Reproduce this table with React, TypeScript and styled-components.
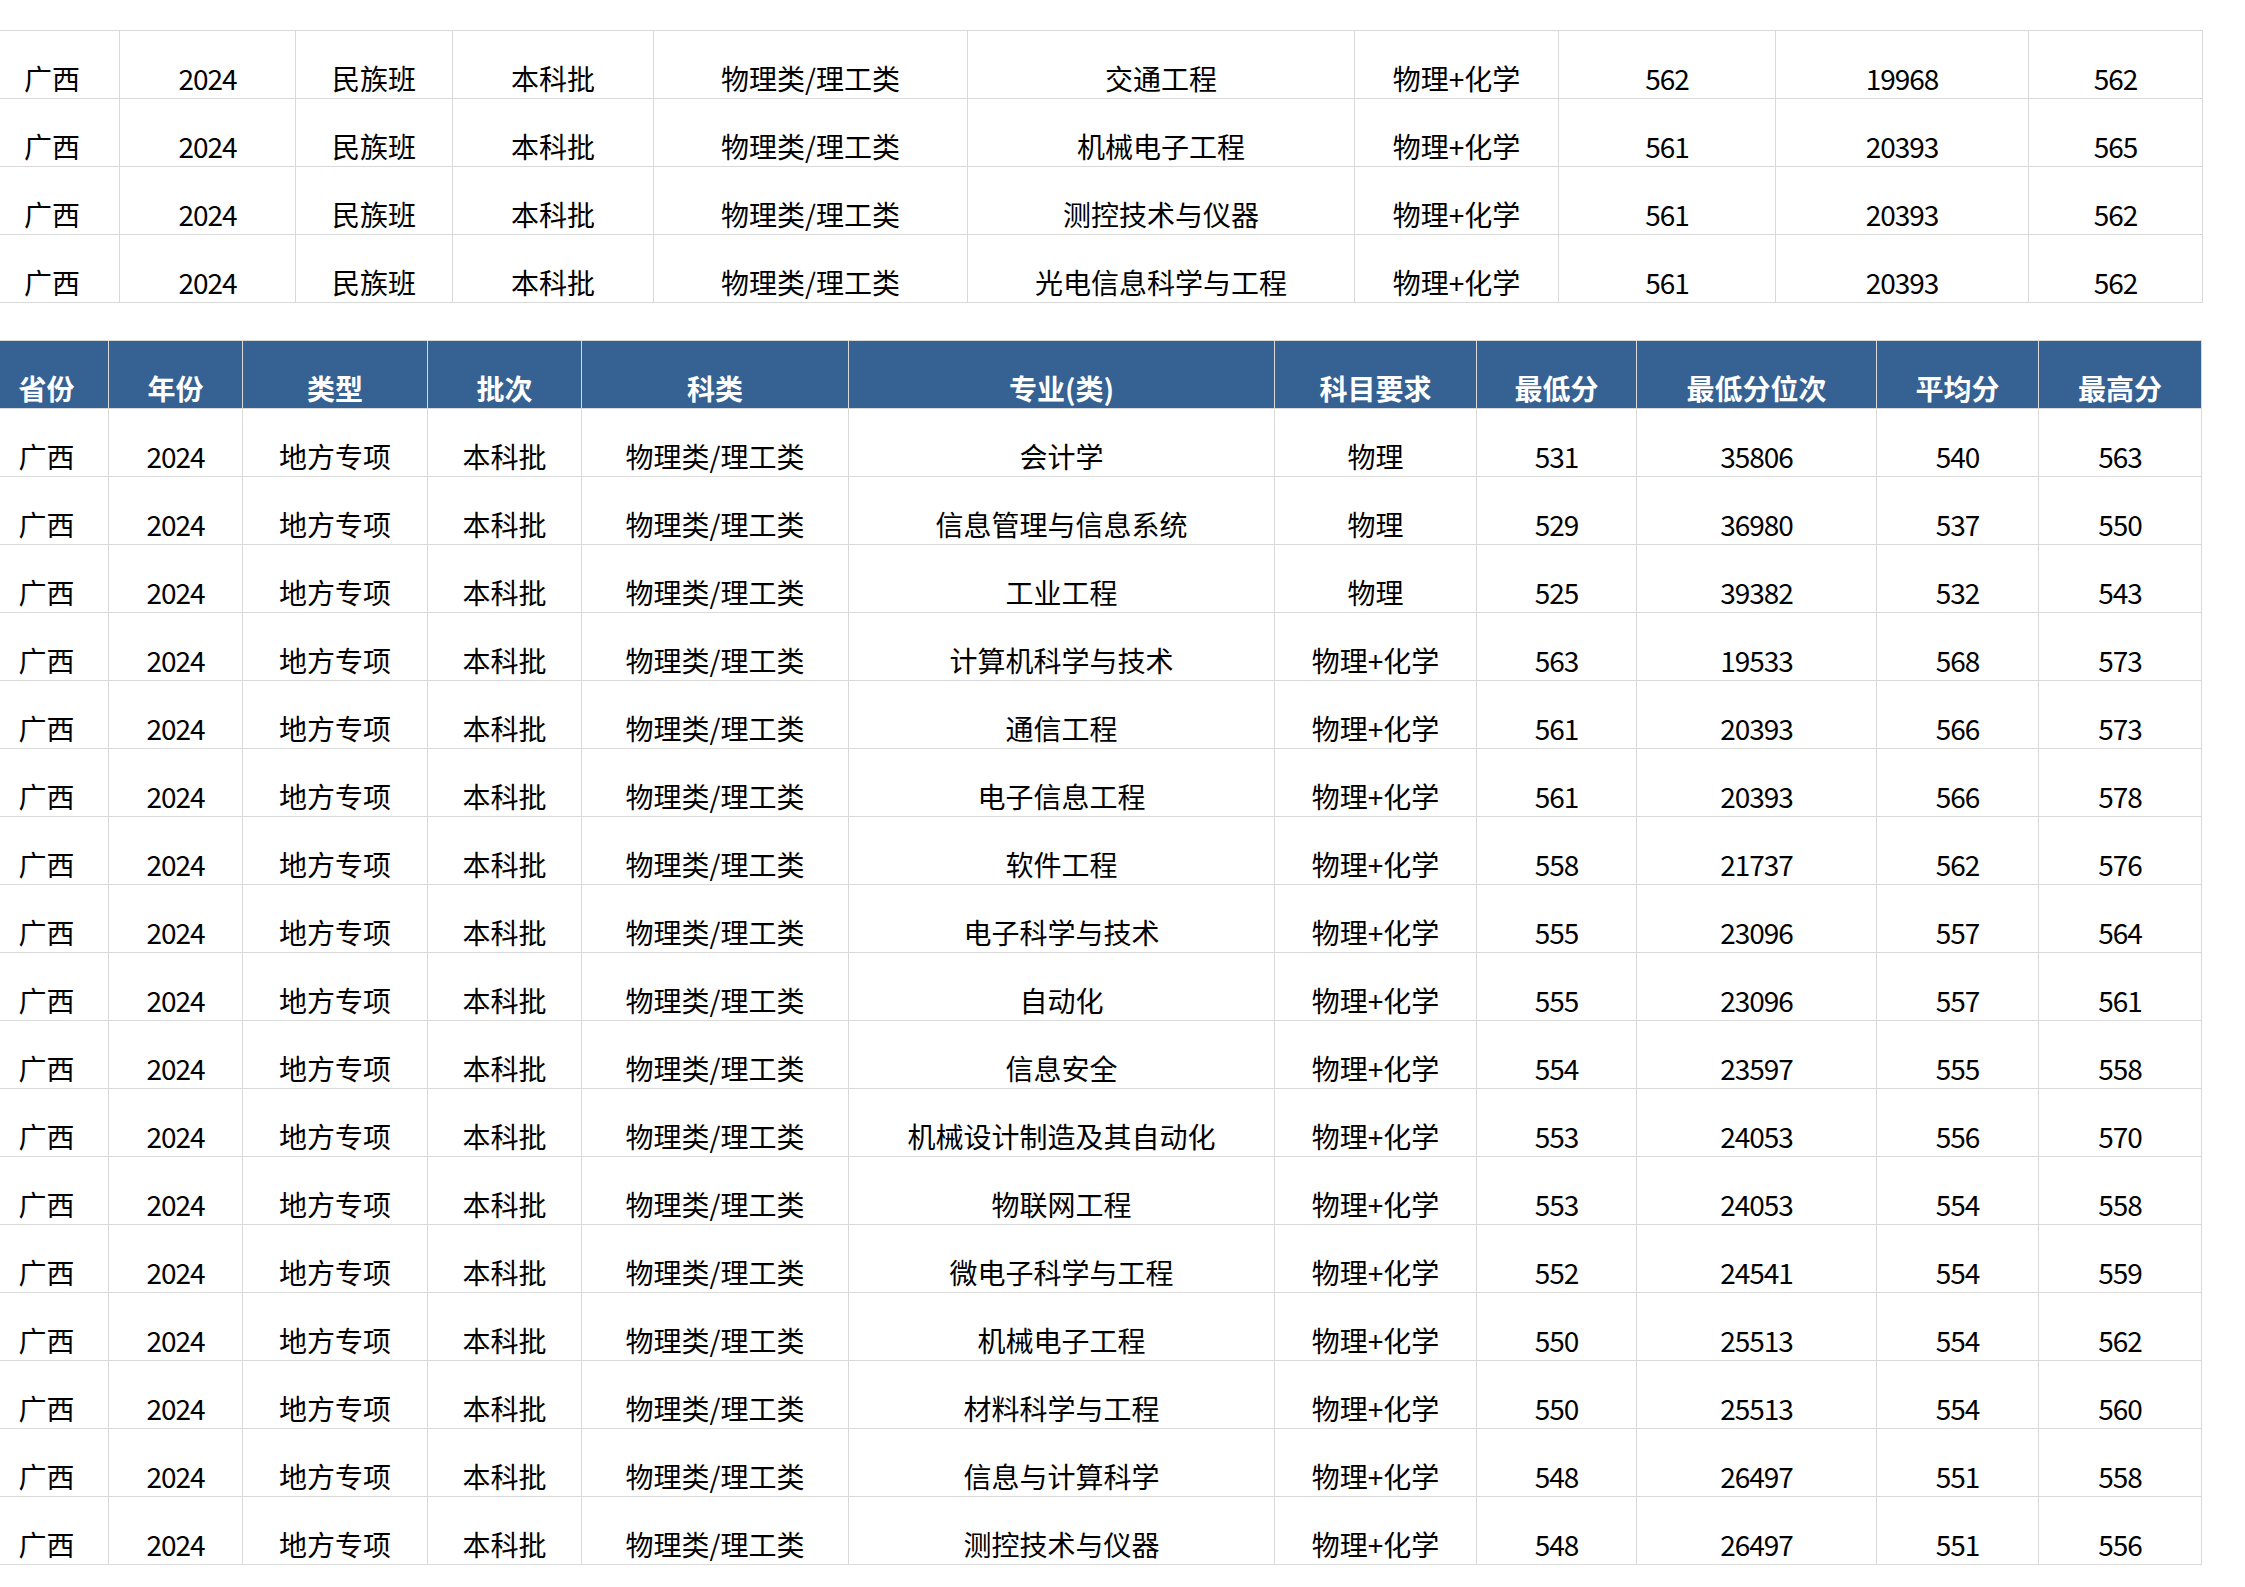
import React from 'react';
import styled, {createGlobalStyle} from 'styled-components';

const GlobalStyle = createGlobalStyle`
    html, body {
        margin: 0;
        padding: 0;
        background: #ffffff;
    }
    body {
        font-family: "Noto Sans CJK SC", "Noto Sans", sans-serif;
    }
`

// column widths (px), first column starts 15px off the left edge
const topCols = [135, 176, 157, 201, 314, 387, 204, 217, 253, 174];
const mainCols = [124, 134, 185, 154, 267, 426, 202, 160, 240, 162, 163];

const topRows = [
    ['广西', '2024', '民族班', '本科批', '物理类/理工类', '交通工程', '物理+化学', '562', '19968', '562'],
    ['广西', '2024', '民族班', '本科批', '物理类/理工类', '机械电子工程', '物理+化学', '561', '20393', '565'],
    ['广西', '2024', '民族班', '本科批', '物理类/理工类', '测控技术与仪器', '物理+化学', '561', '20393', '562'],
    ['广西', '2024', '民族班', '本科批', '物理类/理工类', '光电信息科学与工程', '物理+化学', '561', '20393', '562'],
];

const headers = ['省份', '年份', '类型', '批次', '科类', '专业(类)', '科目要求', '最低分', '最低分位次', '平均分', '最高分'];

const majors: [string, string, string, string, string, string][] = [
    ['会计学', '物理', '531', '35806', '540', '563'],
    ['信息管理与信息系统', '物理', '529', '36980', '537', '550'],
    ['工业工程', '物理', '525', '39382', '532', '543'],
    ['计算机科学与技术', '物理+化学', '563', '19533', '568', '573'],
    ['通信工程', '物理+化学', '561', '20393', '566', '573'],
    ['电子信息工程', '物理+化学', '561', '20393', '566', '578'],
    ['软件工程', '物理+化学', '558', '21737', '562', '576'],
    ['电子科学与技术', '物理+化学', '555', '23096', '557', '564'],
    ['自动化', '物理+化学', '555', '23096', '557', '561'],
    ['信息安全', '物理+化学', '554', '23597', '555', '558'],
    ['机械设计制造及其自动化', '物理+化学', '553', '24053', '556', '570'],
    ['物联网工程', '物理+化学', '553', '24053', '554', '558'],
    ['微电子科学与工程', '物理+化学', '552', '24541', '554', '559'],
    ['机械电子工程', '物理+化学', '550', '25513', '554', '562'],
    ['材料科学与工程', '物理+化学', '550', '25513', '554', '560'],
    ['信息与计算科学', '物理+化学', '548', '26497', '551', '558'],
    ['测控技术与仪器', '物理+化学', '548', '26497', '551', '556'],
];

const isNum = (s: string) => /^\d+$/.test(s);

export default function App() {
    return (
        <>
            <GlobalStyle/>
            <Page>
                <Sheet>
                    {topRows.map((r, i) => (
                        <Row key={i} $cols={topCols}>
                            {r.map((c, j) => <Cell key={j} $num={isNum(c)}>{c}</Cell>)}
                        </Row>
                    ))}
                </Sheet>

                <Sheet $gap={37}>
                    <Row $cols={mainCols}>
                        {headers.map(h => <Cell key={h} $head>{h}</Cell>)}
                    </Row>
                    {majors.map((m, i) => (
                        <Row key={i} $cols={mainCols}>
                            {['广西', '2024', '地方专项', '本科批', '物理类/理工类', ...m].map((c, j) =>
                                <Cell key={j} $num={isNum(c)}>{c}</Cell>
                            )}
                        </Row>
                    ))}
                </Sheet>
            </Page>
        </>
    );
}

const Page = styled.div`
    width: 2245px;
    height: 1587px;
    box-sizing: border-box;
    padding-top: 30px;
    overflow: hidden;
    background: #ffffff;
`

const Sheet = styled.div<{ $gap?: number }>`
    width: max-content;
    margin-left: -15px;
    margin-top: ${p => p.$gap ?? 0}px;
    border-top: 1px solid #d9d9d9;
`

const Row = styled.div<{ $cols: number[] }>`
    display: grid;
    grid-template-columns: ${p => p.$cols.map(c => c + 'px').join(' ')};
`

const Cell = styled.div<{ $head?: boolean; $num?: boolean }>`
    box-sizing: border-box;
    height: 68px;
    display: flex;
    align-items: flex-end;
    justify-content: center;
    padding-bottom: 6px;
    border-right: 1px solid #d9d9d9;
    border-bottom: 1px solid #d9d9d9;
    font-size: 28px;
    line-height: 28px;
    white-space: nowrap;
    letter-spacing: ${p => p.$num ? '-1px' : '0'};
    color: ${p => p.$head ? '#ffffff' : '#000000'};
    background: ${p => p.$head ? '#356193' : '#ffffff'};
    font-weight: ${p => p.$head ? 700 : 400};
`
